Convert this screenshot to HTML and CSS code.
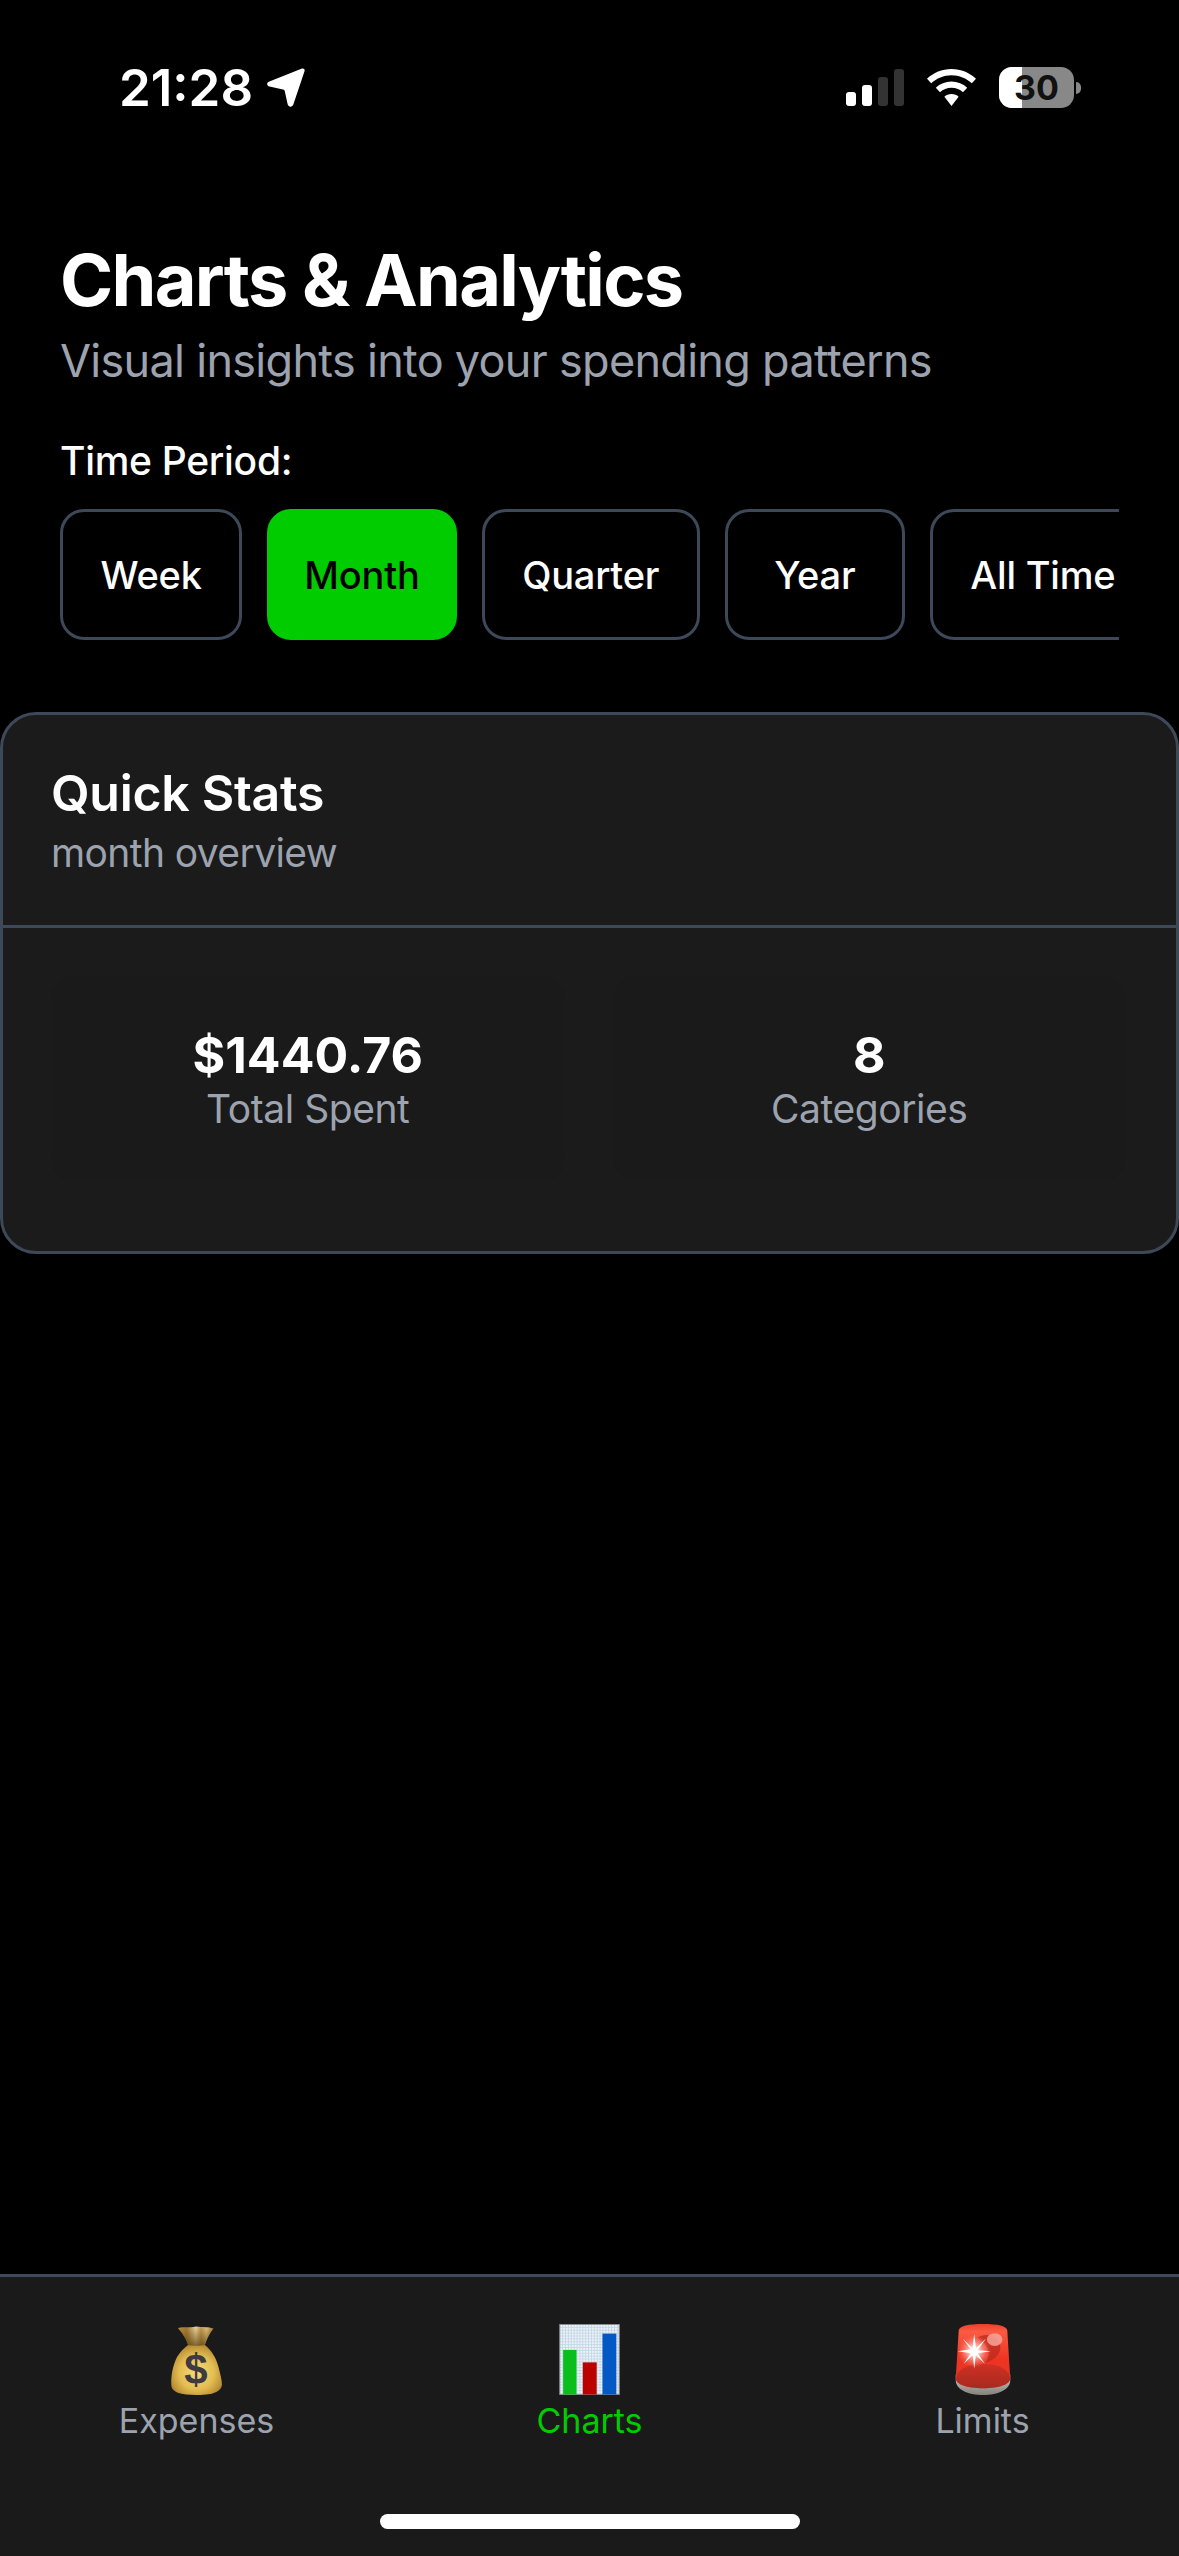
FILE: index.html

```html
<!DOCTYPE html>
<html lang="en">
<head>
    <meta charset="UTF-8">
    <meta name="viewport" content="width=device-width, initial-scale=1.0">
    <title>Charts &amp; Analytics</title>
    <link rel="stylesheet" href="styles.css">
</head>
<body>
<div class="app">
    <div class="status-bar">
        <div class="status-left">
            <span class="clock">21:28</span>
            <svg class="location" width="38" height="39" viewBox="0 0 38 39">
                <path d="M35 0.5 C37 0 38 1.2 37.5 3.2 L26.5 36 C25.5 39.5 21.5 39.8 20.6 36 L17.8 23.2 C17.6 22 17 21.6 16 21.4 L2.5 18.6 C-0.6 17.8 -0.6 14.4 2.4 13.4 Z" fill="#fff"/>
            </svg>
        </div>
        <div class="status-right">
            <div class="signal">
                <span class="bar bar-1"></span>
                <span class="bar bar-2"></span>
                <span class="bar bar-3"></span>
                <span class="bar bar-4"></span>
            </div>
            <svg class="wifi" width="49" height="37" viewBox="0 0 49 37">
                <path d="M24.5 0 C34 0 42.5 3.6 49 9.8 L44.8 14.2 C39.4 9.2 32.4 6.2 24.5 6.2 C16.6 6.2 9.6 9.2 4.2 14.2 L0 9.8 C6.5 3.6 15 0 24.5 0 Z" fill="#fff"/>
                <path d="M24.5 12.6 C30.6 12.6 36 14.9 40.2 18.8 L36 23.2 C33 20.5 29 18.8 24.5 18.8 C20 18.8 16 20.5 13 23.2 L8.8 18.8 C13 14.9 18.4 12.6 24.5 12.6 Z" fill="#fff"/>
                <path d="M24.5 25 C27.4 25 29.9 26 31.6 27.8 L24.5 37 L17.4 27.8 C19.1 26 21.6 25 24.5 25 Z" fill="#fff"/>
            </svg>
            <div class="battery">
                <div class="battery-body">
                    <div class="battery-fill"></div>
                    <span class="battery-level">30</span>
                </div>
                <div class="battery-nub"></div>
            </div>
        </div>
    </div>

    <div class="page-head">
        <h1>Charts &amp; Analytics</h1>
        <p class="subtitle">Visual insights into your spending patterns</p>
        <div class="period-label">Time Period:</div>
        <div class="period-row">
            <button class="period-btn">Week</button>
            <button class="period-btn active">Month</button>
            <button class="period-btn">Quarter</button>
            <button class="period-btn">Year</button>
            <button class="period-btn">All Time</button>
        </div>
    </div>

    <div class="card">
        <div class="card-head">
            <h2>Quick Stats</h2>
            <p>month overview</p>
        </div>
        <div class="stats">
            <div class="stat">
                <div class="stat-value">$1440.76</div>
                <div class="stat-label">Total Spent</div>
            </div>
            <div class="stat">
                <div class="stat-value">8</div>
                <div class="stat-label">Categories</div>
            </div>
        </div>
    </div>

    <div class="spacer"></div>

    <div class="tab-bar">
        <div class="tabs">
            <div class="tab">
                <svg class="tab-icon" width="51" height="69" viewBox="0 0 51 69">
                    <defs>
                        <radialGradient id="bagBody" cx="0.5" cy="0.55" r="0.62">
                            <stop offset="0" stop-color="#f6dd7a"/>
                            <stop offset="0.55" stop-color="#e3bd52"/>
                            <stop offset="0.85" stop-color="#bd9236"/>
                            <stop offset="1" stop-color="#8f6a26"/>
                        </radialGradient>
                        <linearGradient id="bagNeck" x1="0" y1="0" x2="1" y2="0">
                            <stop offset="0" stop-color="#b98f45"/>
                            <stop offset="0.25" stop-color="#a67c30"/>
                            <stop offset="0.5" stop-color="#ecd7a0"/>
                            <stop offset="0.65" stop-color="#c39a48"/>
                            <stop offset="0.8" stop-color="#e2c47f"/>
                            <stop offset="1" stop-color="#a17a33"/>
                        </linearGradient>
                        <linearGradient id="bagShade" x1="0" y1="0" x2="0" y2="1">
                            <stop offset="0" stop-color="#5a3c0c" stop-opacity="0"/>
                            <stop offset="1" stop-color="#5a3c0c" stop-opacity="0.75"/>
                        </linearGradient>
                    </defs>
                    <path d="M7 2 C14 0.5 18 2 25 0.5 C32 1.5 37 0.5 42.5 2.5 C39 7 36 12 33.5 20 L17.5 20 C15 12 11 7 7 2 Z" fill="url(#bagNeck)"/>
                    <path d="M7 2 C14 0.5 18 2 25 0.5 C32 1.5 37 0.5 42.5 2.5 C39 7 36 12 33.5 20 L17.5 20 C15 12 11 7 7 2 Z" fill="url(#bagShade)"/>
                    <path d="M17 19 C22 20 29 20 34 19 C40 24 45 31 47.5 41 C49 47 51 54 51 59 C50 65 44 69 26 69 C9 69 2 66 0.5 61 C-0.5 52 1.5 40 6 31 C9 26 13 22 17 19 Z" fill="url(#bagBody)"/>
                    <text class="bag-sign" x="25" y="58">$</text>
                </svg>
                <span class="tab-label">Expenses</span>
            </div>
            <div class="tab active">
                <svg class="tab-icon" width="63" height="74" viewBox="0 0 63 74">
                    <defs>
                        <pattern id="chartGrid" width="3" height="3" patternUnits="userSpaceOnUse">
                            <rect width="3" height="3" fill="#eef3f7"/>
                            <rect width="1" height="3" fill="#c5d8e8"/>
                            <rect width="3" height="1" fill="#c5d8e8"/>
                        </pattern>
                    </defs>
                    <rect x="0.5" y="0.5" width="62" height="73" fill="url(#chartGrid)" stroke="#8a8f94"/>
                    <rect x="4" y="27" width="14" height="46.5" fill="#0abf1c"/>
                    <rect x="24.5" y="40" width="14.5" height="33.5" fill="#bb0000"/>
                    <rect x="45" y="10" width="14.5" height="63.5" fill="#0458c4"/>
                </svg>
                <span class="tab-label">Charts</span>
            </div>
            <div class="tab">
                <svg class="tab-icon" width="56" height="73" viewBox="0 0 56 73">
                    <defs>
                        <linearGradient id="sirenDome" x1="0" y1="0" x2="0" y2="1">
                            <stop offset="0" stop-color="#e9402c"/>
                            <stop offset="0.12" stop-color="#fb5a42"/>
                            <stop offset="0.55" stop-color="#ee3322"/>
                            <stop offset="1" stop-color="#e23a28"/>
                        </linearGradient>
                        <linearGradient id="sirenBase" x1="0" y1="0" x2="0" y2="1">
                            <stop offset="0" stop-color="#c9c6c0"/>
                            <stop offset="1" stop-color="#85827e"/>
                        </linearGradient>
                        <linearGradient id="sirenFloor" x1="0" y1="0" x2="0" y2="1">
                            <stop offset="0" stop-color="#cf3022"/>
                            <stop offset="1" stop-color="#a82a20"/>
                        </linearGradient>
                        <radialGradient id="sirenGlow" cx="0.5" cy="0.5" r="0.5">
                            <stop offset="0" stop-color="#ffffff"/>
                            <stop offset="0.3" stop-color="#ffd6ce" stop-opacity="0.9"/>
                            <stop offset="1" stop-color="#f4786a" stop-opacity="0"/>
                        </radialGradient>
                        <filter id="sirenSoft" x="-20%" y="-20%" width="140%" height="140%">
                            <feGaussianBlur stdDeviation="0.6"/>
                        </filter>
                    </defs>
                    <path d="M0 58 C0 67 12 73 28 73 C44 73 56 67 56 58 L56 52 L0 52 Z" fill="url(#sirenBase)"/>
                    <path d="M3 7 C3 2 13 0 28 0 C43 0 53 2 53 7 L56 56 C56 62 44 66 28 66 C12 66 0 62 0 56 Z" fill="url(#sirenDome)"/>
                    <path d="M2 51 C6 44 16 41 28 41 C40 41 50 44 54.5 51 L56 56 C56 62 44 66 28 66 C12 66 0 62 0 56 Z" fill="url(#sirenFloor)"/>
                    <path d="M22 14 C32 8 44 12 46 24 C46 32 38 38 30 40 C36 33 36 24 22 14 Z" fill="#b92a1d" opacity="0.75"/>
                    <ellipse cx="40" cy="16" rx="8" ry="6.5" fill="#f7a598" opacity="0.85"/>
                    <circle cx="19" cy="28" r="17" fill="url(#sirenGlow)"/>
                    <path d="M19 10 L20.8 25 L31 15 L22.5 27 L36 28 L22.5 30 L30 41 L20.6 32 L19 46 L17.4 32 L8 41 L15.5 30 L2 28 L15.5 26 L7 15 L17.2 25 Z" fill="#fff" filter="url(#sirenSoft)"/>
                </svg>
                <span class="tab-label">Limits</span>
            </div>
        </div>
        <div class="home-indicator"></div>
    </div>
</div>
</body>
</html>
```

FILE: styles.css

```css
* {
    box-sizing: border-box;
}
body {
    margin: 0;
    padding: 0;
    background-color: #000;
    font-family: Inter, "Liberation Sans", sans-serif;
    color: #fff;
}
.app {
    display: flex;
    flex-direction: column;
    height: 2556px;
}

/* status bar */
.status-bar {
    display: flex;
    justify-content: space-between;
    align-items: center;
    height: 39px;
    margin-top: 68px;
    padding: 0 98px 0 119px;
}
.status-left {
    display: flex;
    align-items: center;
    gap: 14px;
}
.clock {
    font-size: 51px;
    font-weight: 600;
    line-height: 39px;
}
.status-right {
    display: flex;
    align-items: center;
}
.signal {
    display: flex;
    align-items: flex-end;
    gap: 6px;
    height: 37px;
}
.bar {
    width: 10px;
    border-radius: 3px;
    background: #fff;
}
.bar-1 { height: 14px; }
.bar-2 { height: 21px; }
.bar-3 { height: 29px; background: #333; }
.bar-4 { height: 37px; background: #333; }
.wifi {
    margin-left: 23px;
}
.battery {
    display: flex;
    align-items: center;
    gap: 2px;
    margin-left: 23px;
}
.battery-body {
    position: relative;
    display: flex;
    align-items: center;
    justify-content: center;
    width: 75px;
    height: 41px;
    border-radius: 13px;
    background: #888;
    overflow: hidden;
}
.battery-fill {
    position: absolute;
    left: 0;
    top: 0;
    bottom: 0;
    width: 30%;
    background: #fff;
}
.battery-level {
    position: relative;
    font-size: 34px;
    font-weight: 700;
    line-height: 41px;
    color: #111;
}
.battery-nub {
    width: 5px;
    height: 12px;
    background: #888;
    border-radius: 0 6px 6px 0;
}

/* page header */
.page-head {
    padding: 0 60px;
    margin-top: 131px;
}
h1 {
    margin: 0;
    font-size: 72px;
    font-weight: 700;
    line-height: 84px;
    letter-spacing: -1.7px;
}
.subtitle {
    margin: 12px 0 0;
    font-size: 45px;
    line-height: 54px;
    letter-spacing: -0.7px;
    color: #9ca3af;
}
.period-label {
    margin-top: 49px;
    font-size: 39px;
    font-weight: 500;
    line-height: 48px;
    letter-spacing: -0.3px;
}
.period-row {
    display: flex;
    gap: 25px;
    margin-top: 24px;
    overflow: hidden;
}
.period-btn {
    flex-shrink: 0;
    min-width: 180px;
    height: 131px;
    padding: 0 37.5px;
    border: 3px solid #3d4859;
    border-radius: 24px;
    background: transparent;
    font-family: inherit;
    font-size: 38px;
    font-weight: 500;
    letter-spacing: -0.2px;
    color: #fff;
}
.period-btn.active {
    padding: 0 34px;
    background: #00cc00;
    border-color: #00cc00;
    color: #000;
}

/* quick stats card */
.card {
    margin-top: 72px;
    border: 3px solid #3d4859;
    border-radius: 36px;
    background: #1b1b1b;
}
.card-head {
    height: 213px;
    padding: 48px 48px 0;
    border-bottom: 3px solid #3d4859;
}
h2 {
    margin: 0;
    font-size: 50px;
    font-weight: 600;
    line-height: 60px;
    letter-spacing: -0.3px;
}
.card-head p {
    margin: 6px 0 0;
    font-size: 39px;
    line-height: 48px;
    letter-spacing: -0.6px;
    color: #9ca3af;
}
.stats {
    display: grid;
    grid-template-columns: 1fr 1fr;
    gap: 48px;
    padding: 48px 50px 70px 48px;
}
.stat {
    display: flex;
    flex-direction: column;
    align-items: center;
    justify-content: center;
    height: 205px;
    border-radius: 24px;
    background: #1a1a1a;
}
.stat-value {
    font-size: 50px;
    font-weight: 700;
    line-height: 60px;
}
.stat-label {
    font-size: 39px;
    line-height: 48px;
    letter-spacing: -0.45px;
    color: #9ca3af;
}

.spacer {
    flex: 1;
}

/* bottom tabs */
.tab-bar {
    height: 282px;
    border-top: 3px solid #3d4859;
    background: #1a1a1a;
}
.tabs {
    display: grid;
    grid-template-columns: repeat(3, 1fr);
    padding-top: 47px;
}
.tab {
    display: flex;
    flex-direction: column;
    align-items: center;
    justify-content: flex-end;
    height: 117px;
}
.tab-icon {
    display: block;
}
.tab-label {
    margin-top: 6px;
    font-size: 34px;
    font-weight: 400;
    line-height: 40px;
    color: #9ca3af;
}
.tab.active .tab-label {
    color: #00cc00;
}
.bag-sign {
    font-family: "Liberation Sans", sans-serif;
    font-size: 42px;
    font-weight: 700;
    fill: #3f3a40;
    text-anchor: middle;
}
.home-indicator {
    width: 420px;
    height: 15px;
    margin: 73px auto 0;
    border-radius: 8px;
    background: #fff;
}
```
